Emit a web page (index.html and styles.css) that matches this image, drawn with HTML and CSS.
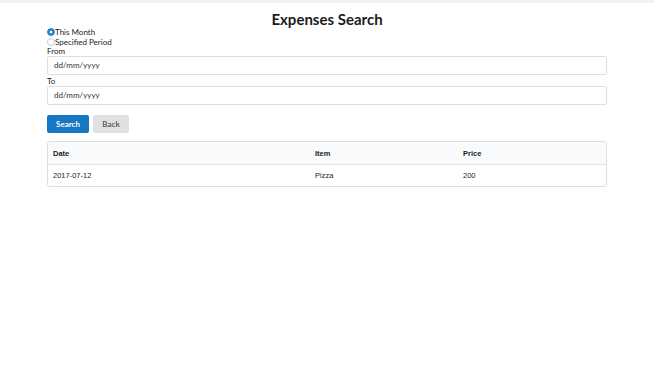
FILE: index.html
```html
<!DOCTYPE html>
<html>
<head>
<meta charset="utf-8">
<link rel="stylesheet" href="styles.css">
</head>
<body>
<div class="topbar"></div>
<h1 class="title">Expenses Search</h1>
<div class="container">
  <div class="radios">
    <label class="radio"><span class="dot checked"></span>This Month</label>
    <label class="radio"><span class="dot"></span>Specified Period</label>
  </div>
  <div class="field">
    <label class="lbl">From</label>
    <div class="input">dd/mm/yyyy</div>
  </div>
  <div class="field">
    <label class="lbl">To</label>
    <div class="input">dd/mm/yyyy</div>
  </div>
  <div class="buttons">
    <button class="btn primary">Search</button>
    <button class="btn secondary">Back</button>
  </div>
  <table class="tbl">
    <thead>
      <tr><th class="c1">Date</th><th class="c2">Item</th><th class="c3">Price</th></tr>
    </thead>
    <tbody>
      <tr><td>2017-07-12</td><td>Pizza</td><td>200</td></tr>
    </tbody>
  </table>
</div>
</body>
</html>
```
FILE: styles.css
```css
html, body {
  margin: 0;
  padding: 0;
  background: #fff;
  font-family: Lato, "Open Sans", sans-serif;
  color: rgba(0,0,0,0.87);
}
.topbar {
  height: 3px;
  background: #f2f2f2;
}
.title {
  margin: 7px 0 0;
  text-align: center;
  font-size: 15px;
  line-height: 18px;
  font-weight: 700;
  color: #1b1c1d;
}
.container {
  width: 560px;
  margin: 0 auto;
  font-size: 8px;
}
.radios {
  display: flex;
  flex-direction: column;
  margin-top: -1px;
}
.radio {
  display: flex;
  align-items: center;
  height: 10px;
  line-height: 10px;
  font-size: 8px;
  color: #1b1c1d;
}
.dot {
  width: 6px;
  height: 6px;
  border-radius: 50%;
  border: 1px solid #c8c8c8;
  background: #fff;
  margin-right: 0;
  box-sizing: content-box;
}
.dot.checked {
  border: 1px solid #2185d0;
  background: radial-gradient(circle, #fff 0 1.4px, #2185d0 1.6px);
}
.field {
  display: flex;
  flex-direction: column;
}
.lbl {
  height: 9px;
  line-height: 9px;
  font-size: 8px;
  color: #1b1c1d;
}
.input {
  height: 19px;
  box-sizing: border-box;
  border: 1px solid #dedede;
  border-radius: 2px;
  padding: 0 6px;
  line-height: 17px;
  font-size: 8px;
  color: #333;
}
.field + .field { margin-top: 2px; }
.buttons {
  display: flex;
  gap: 4px;
  margin-top: 10px;
}
.btn {
  font-family: Lato, "Open Sans", sans-serif;
  height: 18px;
  border: none;
  border-radius: 2px;
  font-size: 8px;
  font-weight: 700;
  padding: 0;
  cursor: pointer;
}
.btn.primary {
  background: #1678c2;
  color: #fff;
  width: 42px;
}
.btn.secondary {
  background: #e0e1e2;
  color: rgba(0,0,0,0.65);
  width: 36px;
}
.tbl {
  margin-top: 8px;
  width: 560px;
  border-collapse: separate;
  border-spacing: 0;
  border: 1px solid #dcdddd;
  border-radius: 3px;
  font-family: "Liberation Sans", Arial, sans-serif;
  font-size: 7.5px;
  color: #1b1c1d;
}
.tbl th {
  background: #f9fafb;
  text-align: left;
  font-weight: 700;
  height: 22px;
  padding: 0 5px;
  border-bottom: 1px solid #e3e4e5;
}
.tbl th:first-child { border-top-left-radius: 3px; }
.tbl th:last-child { border-top-right-radius: 3px; }
.tbl td {
  height: 21px;
  padding: 0 5px;
}
.c1 { width: 252px; }
.c2 { width: 138px; }
```
